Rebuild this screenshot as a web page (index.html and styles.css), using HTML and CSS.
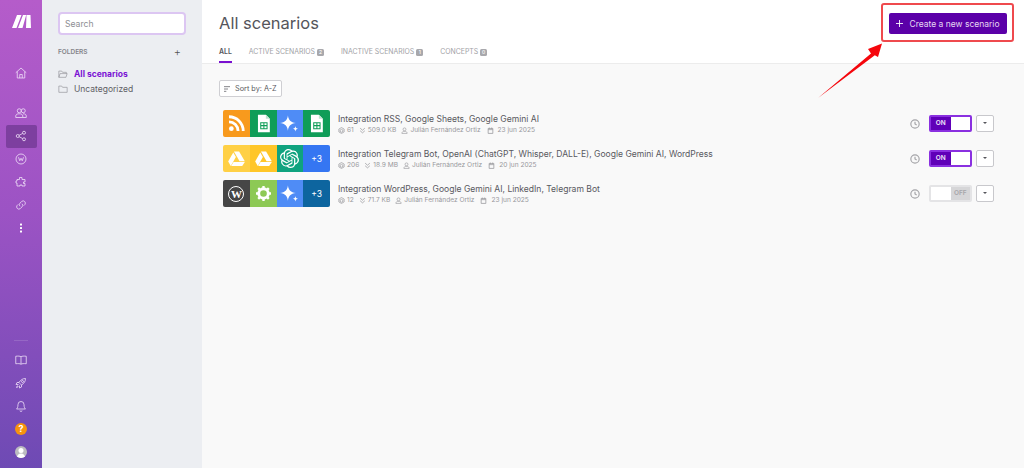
FILE: index.html
```html
<!DOCTYPE html>
<html lang="es">
<head>
<meta charset="utf-8">
<title>All scenarios</title>
<link rel="stylesheet" href="styles.css">
</head>
<body>
<svg class="defs" width="0" height="0" aria-hidden="true">
  <defs>
    <symbol id="gem" viewBox="0 0 24 24"><path d="M10 2c.9 6 3.400 8.600 10 9.500-6.600.9-9.100 3.500-10 9.500-.9-6-3.400-8.600-10-9.500 6.600-.9 9.100-3.500 10-9.500z" fill="#fff"/><path d="M19.500 15c.3 2.200 1.300 3.200 3.500 3.500-2.200.3-3.200 1.300-3.500 3.500-.3-2.200-1.300-3.200-3.500-3.500 2.200-.3 3.200-1.300 3.500-3.500z" fill="#fff"/></symbol>
    <symbol id="sheet" viewBox="0 0 24 24"><path d="M5 1h10l5 5v17H5z" fill="#fff"/><path d="M15 1l5 5h-5z" fill="#bfe3d0"/><path d="M8.500 11h8v7.500h-8zM8.500 14.700h8M12.500 11v7.500" fill="none" stroke="#0f9d58" stroke-width="1.300"/></symbol>
    <symbol id="drive" viewBox="0 0 24 24"><path d="M8.700 3h6.600l7.200 12.500h-6.600z" fill="#fff"/><path d="M7.900 4.500l3.300 5.700L4.800 21.500l-3.300-5.700z" fill="#fff"/><path d="M8.200 16.500h14.300l-3.300 5H5.300z" fill="#fff"/></symbol>
    <symbol id="gpt" viewBox="0 0 24 24"><path fill="#fff" d="M22.2819 9.8211a5.9847 5.9847 0 0 0-.5157-4.9108 6.0462 6.0462 0 0 0-6.5098-2.9A6.0651 6.0651 0 0 0 4.9807 4.1818a5.9847 5.9847 0 0 0-3.9977 2.9 6.0462 6.0462 0 0 0 .7427 7.0966 5.98 5.98 0 0 0 .511 4.9107 6.051 6.051 0 0 0 6.5146 2.9001A5.9847 5.9847 0 0 0 13.2599 24a6.0557 6.0557 0 0 0 5.7718-4.2058 5.9894 5.9894 0 0 0 3.9977-2.9001 6.0557 6.0557 0 0 0-.7475-7.0729zm-9.022 12.6081a4.4755 4.4755 0 0 1-2.8764-1.0408l.1419-.0804 4.7783-2.7582a.7948.7948 0 0 0 .3927-.6813v-6.7369l2.02 1.1686a.071.071 0 0 1 .038.052v5.5826a4.504 4.504 0 0 1-4.4945 4.4944zm-9.6607-4.1254a4.4708 4.4708 0 0 1-.5346-3.0137l.142.0852 4.783 2.7582a.7712.7712 0 0 0 .7806 0l5.8428-3.3685v2.3324a.0804.0804 0 0 1-.0332.0615L9.74 19.9502a4.4992 4.4992 0 0 1-6.1408-1.6464zM2.3408 7.8956a4.485 4.485 0 0 1 2.3655-1.9728V11.6a.7664.7664 0 0 0 .3879.6765l5.8144 3.3543-2.0201 1.1685a.0757.0757 0 0 1-.071 0l-4.8303-2.7865A4.504 4.504 0 0 1 2.3408 7.872zm16.5963 3.8558L13.1038 8.364 15.1192 7.2a.0757.0757 0 0 1 .071 0l4.8303 2.7913a4.4944 4.4944 0 0 1-.6765 8.1042v-5.6772a.79.79 0 0 0-.407-.667zm2.0107-3.0231l-.142-.0852-4.7735-2.7818a.7759.7759 0 0 0-.7854 0L9.409 9.2297V6.8974a.0662.0662 0 0 1 .0284-.0615l4.8303-2.7866a4.4992 4.4992 0 0 1 6.6802 4.66zM8.3065 12.863l-2.02-1.1638a.0804.0804 0 0 1-.038-.0567V6.0742a4.4992 4.4992 0 0 1 7.3757-3.4537l-.142.0805L8.704 5.459a.7948.7948 0 0 0-.3927.6813zm1.0976-2.3654l2.602-1.4998 2.6069 1.4998v2.9994l-2.5974 1.4997-2.6067-1.4997Z"/></symbol>
    <symbol id="clock" viewBox="0 0 24 24"><circle cx="12" cy="12" r="10" fill="none" stroke="currentColor" stroke-width="2.800"/><path d="M12 6.500V12l4 2.500" fill="none" stroke="currentColor" stroke-width="2.800"/></symbol>
    <symbol id="cube" viewBox="0 0 24 24"><path d="M12 2l9 5v10l-9 5-9-5V7zM12 8l5 3v4l-5 3-5-3v-4z" fill="none" stroke="currentColor" stroke-width="2.400"/></symbol>
    <symbol id="size" viewBox="0 0 24 24"><path d="M4 4l8 7 8-7M4 13l8 7 8-7" fill="none" stroke="currentColor" stroke-width="2.600"/></symbol>
    <symbol id="user" viewBox="0 0 24 24"><circle cx="12" cy="8" r="5" fill="none" stroke="currentColor" stroke-width="2.200"/><path d="M3 22c0-5 3-7 9-7s9 2 9 7z" fill="none" stroke="currentColor" stroke-width="2.200"/></symbol>
    <symbol id="cal" viewBox="0 0 24 24"><path d="M4 5h16v17H4zM4 9h16M8 2v4M16 2v4" fill="none" stroke="currentColor" stroke-width="2.600"/></symbol>
  </defs>
</svg>

<div class="app">
  <nav class="rail">
    <div class="rail-group">
      <svg class="logo" viewBox="0 0 19 13"><path d="M0 13L5 0h4.500L4.500 13zM6 13L11 0h3.200L10.500 13zM14.500 0h4L19 13h-5z" fill="#fff"/></svg>
      <a class="rail-item home"><svg viewBox="0 0 24 24"><path d="M1.500 11.500L12 2l10.500 9.500M4.500 9V22h15V9M9.500 22v-7h5v7"/></svg></a>
      <a class="rail-item"><svg viewBox="0 0 24 24"><circle cx="8.500" cy="7.500" r="4"/><circle cx="16.500" cy="7.500" r="4"/><path d="M1.500 21v-3c0-3 2.500-4.500 7-4.500s7 1.500 7 4.500v3zM16 13.500c4.500 0 6.500 1.500 6.500 4.500v3h-7"/></svg></a>
      <a class="rail-item active"><svg viewBox="0 0 24 24"><circle cx="5.500" cy="12" r="3"/><circle cx="18" cy="5.500" r="3"/><circle cx="18" cy="18.500" r="3"/><path d="M8.200 10.600l7.100-3.700M8.200 13.400l7.100 3.700"/></svg></a>
      <a class="rail-item"><svg viewBox="0 0 24 24"><circle cx="12" cy="12" r="10"/><path d="M7 8.500l2.500 7 2.500-5 2.500 5 2.500-7"/></svg></a>
      <a class="rail-item"><svg viewBox="0 0 24 24"><path d="M9 3h5v4h6v5h-3v3h3v5h-6v-2h-4v2H4v-6H2v-4h2V7h5z"/></svg></a>
      <a class="rail-item"><svg viewBox="0 0 24 24"><path d="M10 14.500a4.500 4.500 0 0 1 0-6.300l3.500-3.500a4.500 4.500 0 0 1 6.300 6.300L17.500 13.300M14 9.500a4.500 4.500 0 0 1 0 6.300l-3.500 3.500a4.500 4.500 0 0 1-6.300-6.300L6.500 10.700"/></svg></a>
      <a class="rail-item"><svg class="solid" viewBox="0 0 24 24"><rect x="10" y="3" width="4" height="4" rx="1"/><rect x="10" y="10" width="4" height="4" rx="1"/><rect x="10" y="17" width="4" height="4" rx="1"/></svg></a>
    </div>
    <div class="rail-group">
      <span class="rail-line"></span>
      <a class="rail-item"><svg viewBox="0 0 24 24"><path d="M12 5.500C10 4 6 4 1.500 4.500v15c4.500-.5 8.500-.5 10.500 1 2-1.500 6-1.500 10.500-1v-15C18 4 14 4 12 5.500zM12 5.500v15"/></svg></a>
      <a class="rail-item"><svg viewBox="0 0 24 24"><path d="M21 3c-6 0-10 3-13 8l5 5c5-3 8-7 8-13zM8 11H4l-2 4h5M13 16v4l-4 2v-5M6 17c-2 1-3 3-3 4 1 0 3-1 4-3"/><circle cx="15" cy="9" r="2"/></svg></a>
      <a class="rail-item"><svg viewBox="0 0 24 24"><path d="M12 3a6 6 0 0 0-6 6c0 6-2 8-3 9h18c-1-1-3-3-3-9a6 6 0 0 0-6-6zM10 21a2 2 0 0 0 4 0"/></svg></a>
      <a class="rail-item"><span class="help">?</span></a>
      <a class="rail-item"><span class="avatar"><svg class="avatar-fig" viewBox="0 0 12 12"><circle cx="6" cy="4.500" r="2.500"/><path d="M2 12c0-3 1.500-4.500 4-4.500s4 1.500 4 4.500z"/></svg></span></a>
    </div>
  </nav>

  <aside class="folders">
    <input class="search" type="text" placeholder="Search">
    <div class="folders-head"><span>FOLDERS</span><span class="plus">+</span></div>
    <ul class="folder-list">
      <li class="folder current"><svg viewBox="0 0 24 24"><path d="M2 20V5h7l2 3h9v3M2 20l3-9h17l-3 9z"/></svg>All scenarios</li>
      <li class="folder"><svg viewBox="0 0 24 24"><path d="M2 20V5h7l2 3h11v12z"/></svg>Uncategorized</li>
    </ul>
  </aside>

  <main class="main">
    <header class="top">
      <div class="title-row">
        <h1>All scenarios</h1>
        <button class="create"><svg class="create-plus" viewBox="0 0 8 8"><path d="M4 0v8M0 4h8"/></svg>Create a new scenario</button>
      </div>
      <div class="tabs">
        <a class="tab selected">ALL</a>
        <a class="tab">ACTIVE SCENARIOS<b>2</b></a>
        <a class="tab">INACTIVE SCENARIOS<b>1</b></a>
        <a class="tab">CONCEPTS<b>0</b></a>
      </div>
    </header>

    <section class="content">
      <button class="sort"><svg viewBox="0 0 24 24"><path d="M3 5h18M3 12h12M3 19h7"/></svg>Sort by: A-Z</button>

      <div class="rows">
        <article class="row">
          <div class="tiles">
            <span class="tile orange"><svg viewBox="0 0 24 24"><circle cx="5.500" cy="18.500" r="3" fill="#fff"/><path d="M2.500 10a11.500 11.500 0 0 1 11.500 11.500M2.500 3.500a18 18 0 0 1 18 18" fill="none" stroke="#fff" stroke-width="3.600"/></svg></span>
            <span class="tile green"><svg><use href="#sheet"/></svg></span>
            <span class="tile blue"><svg><use href="#gem"/></svg></span>
            <span class="tile green"><svg><use href="#sheet"/></svg></span>
          </div>
          <div class="info">
            <div class="name">Integration RSS, Google Sheets, Google Gemini AI</div>
            <div class="meta"><span><svg><use href="#cube"/></svg>61</span><span><svg><use href="#size"/></svg>509.0 KB</span><span><svg><use href="#user"/></svg>Julián Fernández Ortiz</span><span><svg><use href="#cal"/></svg>23 jun 2025</span></div>
          </div>
          <svg class="clock"><use href="#clock"/></svg>
          <div class="toggle on"><span class="t-label">ON</span><span class="t-knob"></span></div>
          <button class="caret"></button>
        </article>

        <article class="row">
          <div class="tiles">
            <span class="tile yellow-l"><svg><use href="#drive"/></svg></span>
            <span class="tile yellow"><svg><use href="#drive"/></svg></span>
            <span class="tile teal"><svg><use href="#gpt"/></svg></span>
            <span class="tile blue2">+3</span>
          </div>
          <div class="info">
            <div class="name">Integration Telegram Bot, OpenAI (ChatGPT, Whisper, DALL-E), Google Gemini AI, WordPress</div>
            <div class="meta"><span><svg><use href="#cube"/></svg>206</span><span><svg><use href="#size"/></svg>18.9 MB</span><span><svg><use href="#user"/></svg>Julián Fernández Ortiz</span><span><svg><use href="#cal"/></svg>20 jun 2025</span></div>
          </div>
          <svg class="clock"><use href="#clock"/></svg>
          <div class="toggle on"><span class="t-label">ON</span><span class="t-knob"></span></div>
          <button class="caret"></button>
        </article>

        <article class="row">
          <div class="tiles">
            <span class="tile dark"><span class="wp">W</span></span>
            <span class="tile lime"><svg viewBox="0 0 24 24"><circle cx="12" cy="12" r="6" fill="none" stroke="#fff" stroke-width="3.600"/><path d="M12 2.500v4M12 17.500v4M2.500 12h4M17.500 12h4M5.300 5.300l2.800 2.800M15.900 15.900l2.800 2.800M18.700 5.300l-2.800 2.800M8.100 15.900l-2.800 2.800" stroke="#fff" stroke-width="3"/></svg></span>
            <span class="tile blue"><svg><use href="#gem"/></svg></span>
            <span class="tile navy">+3</span>
          </div>
          <div class="info">
            <div class="name">Integration WordPress, Google Gemini AI, LinkedIn, Telegram Bot</div>
            <div class="meta"><span><svg><use href="#cube"/></svg>12</span><span><svg><use href="#size"/></svg>71.7 KB</span><span><svg><use href="#user"/></svg>Julián Fernández Ortiz</span><span><svg><use href="#cal"/></svg>23 jun 2025</span></div>
          </div>
          <svg class="clock"><use href="#clock"/></svg>
          <div class="toggle off"><span class="t-knob"></span><span class="t-label">OFF</span></div>
          <button class="caret"></button>
        </article>
      </div>
    </section>
  </main>
</div>

<div class="callout"></div>
<svg class="arrow" viewBox="0 0 70 60"><path d="M0 56L53 11.500 50 7 64 1.500 60 15 56.800 13.200z" fill="#f5060c"/></svg>
</body>
</html>
```

FILE: styles.css
```css
* { box-sizing: border-box; }
html, body { margin: 0; height: 100%; overflow: hidden; }
body { font-family: Inter, "Liberation Sans", sans-serif; color: #4a4a50; background: #f9f9f9; }
.defs { position: absolute; }
button { font-family: inherit; padding: 0; cursor: pointer; }

.app { display: flex; height: 468px; }

/* icon rail */
.rail {
  width: 42px; flex: none;
  display: flex; flex-direction: column; justify-content: space-between;
  padding: 10px 0 4.500px;
  background: linear-gradient(180deg, #b55cca 0%, #9c53c4 45%, #6e4ab4 100%);
}
.rail-group { display: flex; flex-direction: column; align-items: center; }
.logo { width: 19px; height: 13px; margin: 5px 0 33.500px; }
.rail-item { width: 31px; height: 23px; border-radius: 2px; display: flex; align-items: center; justify-content: center; }
.rail-item svg { width: 12px; height: 12px; fill: none; stroke: #efdff8; stroke-width: 1.600; }
.rail-item svg.solid { fill: #fff; stroke: none; }
.rail-item.home { margin-bottom: 17px; }
.rail-item.active { background: #7d3f9f; }
.rail-line { width: 14px; height: 1px; background: rgba(255, 255, 255, .14); margin-bottom: 7.500px; }
.help { width: 12px; height: 12px; border-radius: 50%; background: #f7930e; color: #fff; font-size: 9px; font-weight: 700; line-height: 12px; text-align: center; }
.avatar { width: 12px; height: 12px; border-radius: 50%; background: #bcbcc0; overflow: hidden; display: block; }
.rail-item svg.avatar-fig { width: 12px; height: 12px; display: block; fill: #fff; stroke: none; }

/* folder panel */
.folders { width: 160px; flex: none; background: #eceef2; padding: 12px 16px 0 16px; }
.search {
  display: block; width: 128px; height: 23px; padding: 0 5px;
  border: 2px solid #dcc6f2; border-radius: 4px; background: #fff;
  font: 8.600px Inter, "Liberation Sans", sans-serif; color: #555; outline: none;
}
.search::placeholder { color: #8e8e94; opacity: 1; }
.folders-head { display: flex; justify-content: space-between; align-items: center; height: 14px; margin-top: 10px; padding-right: 5px; font-size: 6.500px; font-weight: 600; color: #84848a; }
.plus { font-size: 11px; font-weight: 300; color: #555; }
.folder-list { list-style: none; margin: 7px 0 0; padding: 0; }
.folder { display: flex; align-items: center; gap: 6px; height: 15px; font-size: 8.500px; color: #5f5f65; }
.folder svg { width: 10px; height: 10px; fill: none; stroke: #94949a; stroke-width: 1.600; }
.folder.current { color: #7a12d4; font-weight: 700; }

/* main */
.main { flex: 1; min-width: 0; display: flex; flex-direction: column; }
.top { height: 64px; flex: none; background: #fff; border-bottom: 1px solid #ececec; padding: 13px 17px 0; display: flex; flex-direction: column; }
.title-row { display: flex; justify-content: space-between; align-items: center; height: 21px; }
h1 { margin: 0 0 2px; font-size: 16.500px; font-weight: 400; color: #55555b; }
.create {
  width: 118px; height: 21px; border: 0; border-radius: 2px; background: #5b00a8;
  color: #e6d8f3; font-size: 8.500px; display: flex; align-items: center; justify-content: center; gap: 6px;
}
.create-plus { width: 7px; height: 7px; fill: none; stroke: #fff; stroke-width: 1; flex: none; }
.tabs { display: flex; gap: 17px; margin-top: auto; }
.tab { height: 24px; padding-top: 8px; font-size: 6.900px; line-height: 10px; color: #a2a2a6; display: flex; align-items: flex-start; }
.tab b { display: inline-block; min-width: 7px; height: 7px; margin: 1.500px 0 0 2px; border-radius: 1.500px; background: #a8a8ac; color: #fff; font-size: 5px; line-height: 7px; font-weight: 500; text-align: center; }
.tab.selected { color: #55555b; font-weight: 600; border-bottom: 2px solid #7a10d0; }

.content { flex: 1; padding: 16px 30px 0 17px; }
.sort { display: flex; align-items: center; gap: 4px; width: 63px; height: 17px; padding-left: 3px; border: 1px solid #cfcfd3; border-radius: 2px; background: #fff; color: #5a5a60; font-size: 7.300px; }
.sort svg { width: 8px; height: 8px; fill: none; stroke: #66666c; stroke-width: 2.400; flex: none; }

.rows { display: flex; flex-direction: column; gap: 8px; margin: 13px 0 0 4px; }
.row { display: flex; align-items: center; height: 27px; }
.tiles { display: flex; width: 107px; height: 27px; flex: none; border-radius: 2px; overflow: hidden; }
.tile { width: 26.750px; flex: none; display: flex; align-items: center; justify-content: center; color: #fff; font-size: 8.500px; }
.tile svg { width: 19px; height: 19px; }
.orange { background: #f89a1d; }
.green { background: #0f9d58; }
.blue { background: #4f8cf6; }
.yellow-l { background: #ffd045; }
.yellow { background: #ffc628; }
.teal { background: #10a37f; }
.blue2 { background: #3576f2; }
.dark { background: #464646; }
.lime { background: #8dc955; }
.navy { background: #0d659f; }
.wp { width: 16px; height: 16px; border-radius: 50%; border: 1px solid #fff; color: #fff; font: 700 11px/14px "Liberation Serif", serif; text-align: center; }

.info { flex: 1; min-width: 0; margin-left: 8px; }
.name { font-size: 8.550px; line-height: 12px; color: #58585e; }
.meta { display: flex; gap: 5px; margin-top: 1px; font-size: 6.600px; line-height: 9px; color: #98989c; }
.meta span { display: flex; align-items: center; gap: 2px; }
.meta span:last-child { gap: 4px; margin-left: 1px; }
.meta svg { width: 7px; height: 7px; color: #98989c; }

.clock { width: 10px; height: 10px; flex: none; color: #a4a4a8; margin-right: 9px; }
.toggle { width: 43px; height: 17px; flex: none; display: flex; border-radius: 2px; overflow: hidden; font-size: 6.500px; font-weight: 600; line-height: 13px; }
.t-label, .t-knob { width: 50%; height: 100%; display: block; text-align: center; }
.toggle.on { border: 2px solid #8a30e0; }
.toggle.on .t-label { background: #6000b8; color: #f2e8fa; }
.toggle.on .t-knob { background: #fff; }
.toggle.off { border: 2px solid #e4e4e6; }
.toggle.off .t-label { background: #d6d6d8; color: #a6a6aa; }
.toggle.off .t-knob { background: #fff; }
.caret { width: 18px; height: 17px; flex: none; margin-left: 4px; border: 1px solid #c8c8cc; border-radius: 2px; background: #fff; position: relative; }
.caret::after { content: ""; position: absolute; left: 6px; top: 6px; border: 2.500px solid transparent; border-top: 2.500px solid #55555b; }

/* annotation drawn over the screenshot */
.callout { position: absolute; left: 881px; top: 3px; width: 133px; height: 39px; border: 2px solid #ef4a4e; border-radius: 3px; }
.arrow { position: absolute; left: 818px; top: 41.500px; width: 70px; height: 60px; }
```
